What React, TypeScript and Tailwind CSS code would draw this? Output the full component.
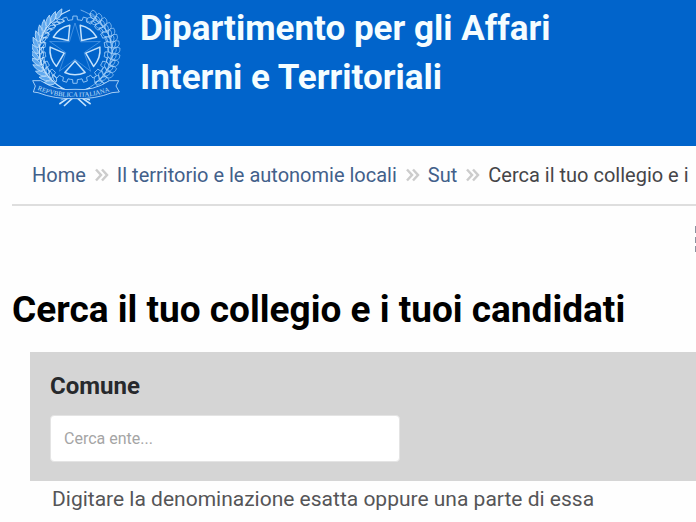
const CX = 165;
const CY = 155;

function polar(r: number, deg: number, cx = CX, cy = CY) {
  const a = (deg * Math.PI) / 180;
  return `${(cx + r * Math.cos(a)).toFixed(1)} ${(cy + r * Math.sin(a)).toFixed(1)}`;
}

function gearPath() {
  const teeth = 20;
  const step = 360 / teeth;
  const pts: string[] = [];
  for (let i = 0; i < teeth; i++) {
    const a = i * step - 90;
    pts.push(polar(90, a - step * 0.5), polar(90, a - step * 0.25), polar(101, a - step * 0.2), polar(101, a + step * 0.2), polar(90, a + step * 0.25));
  }
  return `M${pts.join("L")}Z`;
}

function starPath() {
  const pts: string[] = [];
  for (let i = 0; i < 5; i++) {
    pts.push(polar(80, -90 + i * 72), polar(29, -54 + i * 72));
  }
  return `M${pts.join("L")}Z`;
}

function leaf(r: number, deg: number, tilt: number, length: number, width: number) {
  const [x, y] = polar(r, deg, 166, 160).split(" ").map(Number);
  const dir = deg + tilt;
  const tip = polar(length, dir, x, y);
  const c1 = polar(width, dir - 45, x, y);
  const c2 = polar(width, dir + 45, x, y);
  return `M${x} ${y}Q${c1} ${tip}Q${c2} ${x} ${y}Z`;
}

const olive = Array.from({ length: 14 }, (_, i) => 122 + i * 9);
const oak = Array.from({ length: 14 }, (_, i) => 58 - i * 9);

function Emblem() {
  return (
    <svg viewBox="36 18 270 312" className="h-26 w-[90px] shrink-0" fill="none" stroke="#c4e2fc" strokeWidth="3" strokeLinejoin="round" aria-label="Emblema della Repubblica Italiana" role="img">
      <path d={gearPath()} stroke="#8fc3f5" />
      <path d={starPath()} stroke="#5fa3ea" strokeWidth="2" />
      {[0, 1, 2, 3, 4].map((i) => {
        const m = -54 + i * 72;
        return (
          <path key={i} strokeWidth="4.5" d={`M${polar(34, m)}L${polar(75, m - 24)}A75 75 0 0 1 ${polar(75, m + 24)}Z`} />
        );
      })}
      <g strokeWidth="2.5">
        <path d="M210 306C145 286 62 250 58 166C55 108 88 62 150 36" strokeWidth="4" />
        {olive.map((a) => (
          <g key={a}>
            <path d={leaf(112, a, 60, 36, 18)} fill="#5fa8ee" />
            <path d={leaf(108, a, 125, 24, 13)} />
          </g>
        ))}
      </g>
      <g strokeWidth="2" stroke="#a9d3fa">
        <path d="M122 306C185 288 270 250 274 166C277 108 248 62 182 36" />
        {oak.map((a) => (
          <g key={a}>
            <path d={leaf(110, a, -40, 30, 27)} />
            <path d={leaf(110, a, -120, 25, 20)} />
            <path d={leaf(114, a, -75, 22, 15)} />
          </g>
        ))}
      </g>
      <path d="M118 318L150 296L210 270M132 324L160 298M212 318L180 296L122 270M198 324L170 298" strokeWidth="5" />
      <path d="M38 248L62 248Q110 280 165 274Q220 280 268 248L296 248L288 264L298 282L276 284Q225 304 165 302Q105 304 54 284L40 282L46 264Z" fill="#0863c9" strokeWidth="2.5" />
      <path id="motto" d="M52 275Q110 300 165 296Q220 300 284 274" stroke="none" />
      <text fontFamily="Liberation Serif, serif" fontSize="20" fill="#c4e2fc" stroke="none">
        <textPath href="#motto">REPVBBLICA ITALIANA</textPath>
      </text>
    </svg>
  );
}

function Separator() {
  return (
    <svg viewBox="0 0 15 14" className="h-[14px] w-[15px]" fill="none" stroke="#cccccc" strokeWidth="2.5" aria-hidden="true">
      <path d="M2 1.5L7 7L2 12.5M8 1.5L13 7L8 12.5" />
    </svg>
  );
}

export default function App() {
  return (
    <div className="min-h-screen overflow-hidden bg-[#fefefe] font-[Roboto,sans-serif] text-[#454548]">
      <header className="flex items-start gap-[18px] bg-[#0164cb] px-8 pt-1 pb-[38px]">
        <Emblem />
        <p className="max-w-[480px] text-[35px] leading-[49px] font-bold text-[#f5fdff]">
          Dipartimento per gli Affari Interni e Territoriali
        </p>
      </header>

      <main className="pl-3">
        <nav aria-label="Percorso" className="overflow-hidden border-b-2 border-[#dedede] py-[15px] pl-5">
          <ol className="flex items-center gap-2 text-xl leading-7 whitespace-nowrap text-[#42608a]">
            <li><a href="#home">Home</a></li>
            <li aria-hidden="true"><Separator /></li>
            <li><a href="#territorio">Il territorio e le autonomie locali</a></li>
            <li aria-hidden="true"><Separator /></li>
            <li><a href="#sut">Sut</a></li>
            <li aria-hidden="true"><Separator /></li>
            <li className="text-[#454548]" aria-current="page">Cerca il tuo collegio e i</li>
          </ol>
        </nav>

        <div className="flex justify-end pt-5">
          <svg viewBox="0 0 1 28" className="h-7 w-px" fill="#8b93a0" aria-hidden="true">
            <path d="M0 0H1V7H0ZM0 11H1V17H0ZM0 20H1V26H0Z" />
          </svg>
        </div>

        <h1 className="mt-8 text-[37px] leading-12 font-bold whitespace-nowrap text-black">
          Cerca il tuo collegio e i tuoi candidati
        </h1>

        <form className="mt-[18px] ml-[18px]">
          <div className="bg-[#d5d5d5] px-5 pt-5 pb-[19px]">
            <label htmlFor="comune" className="block text-2xl leading-7 font-bold text-[#27292c]">Comune</label>
            <input
              id="comune"
              type="text"
              placeholder="Cerca ente..."
              aria-describedby="comune-help"
              className="mt-[15px] block h-[47px] w-[350px] rounded-sm border border-[#e4e4e4] bg-white px-[13px] text-base placeholder:text-[#a5a5a5]"
            />
          </div>
          <p id="comune-help" className="px-[22px] pt-1 text-[21px] leading-7 whitespace-nowrap text-[#555557]">
            Digitare la denominazione esatta oppure una parte di essa
          </p>
        </form>
      </main>
    </div>
  );
}
